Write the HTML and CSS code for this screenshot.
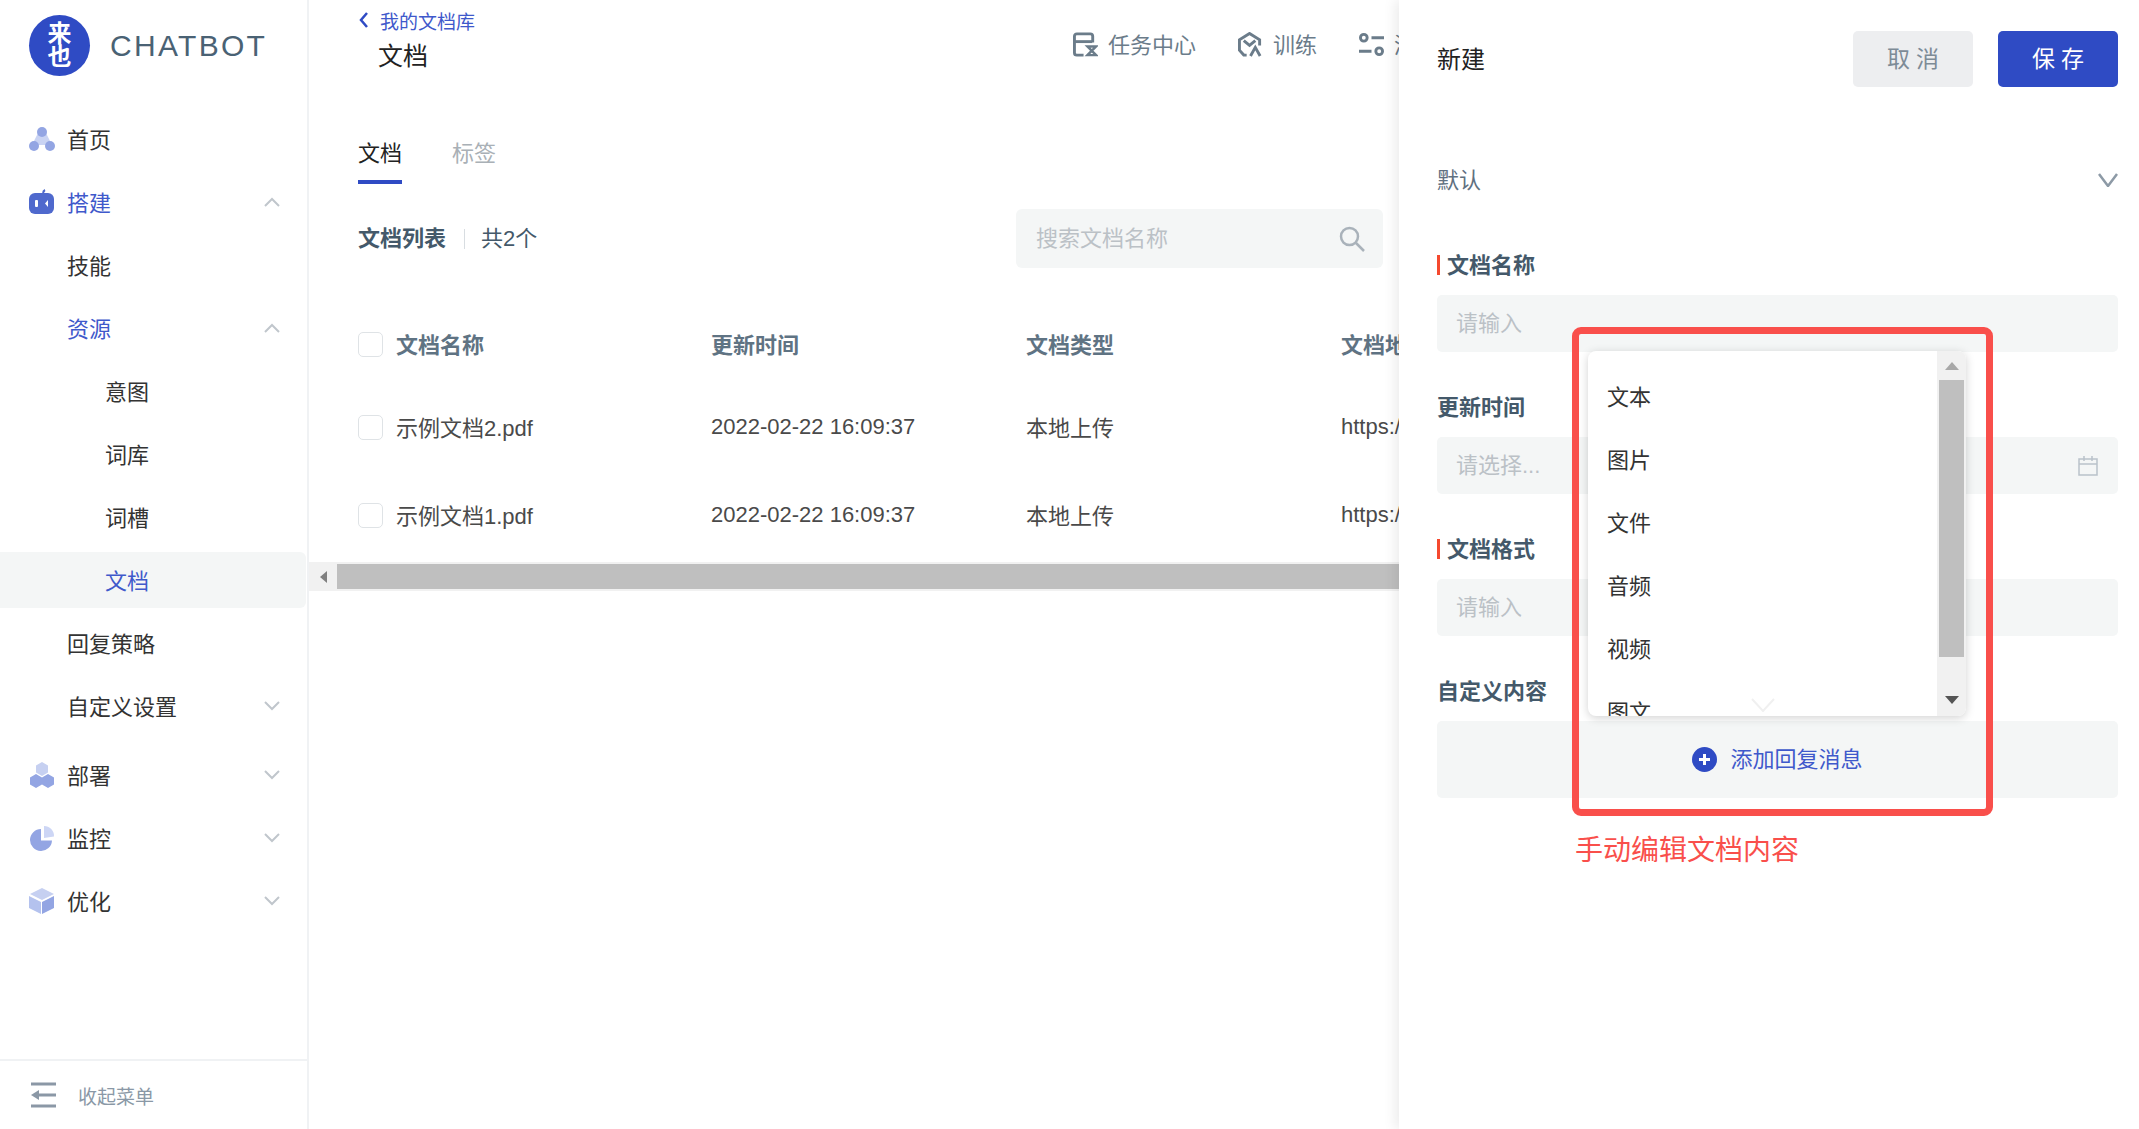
FILE: index.html
```html
<!DOCTYPE html>
<html>
<head>
	<title>CHATBOT</title>
	<meta charset="utf-8">
	<link rel="stylesheet" href="styles.css">
</head>
<body>

<div class="sidebar">
	<div class="logo">
		<div class="logo-mark">来<br>也</div>
		<span class="logo-name">CHATBOT</span>
	</div>
	<div class="menu">
		<div class="item">
			<svg class="micon" viewBox="0 0 26 26"><path d="M9 7h8l6 12H3z" fill="#c9d3f3"/><circle cx="13" cy="6" r="5" fill="#93a5e3"/><circle cx="5" cy="20" r="5" fill="#93a5e3"/><circle cx="21" cy="20" r="5" fill="#93a5e3"/></svg>
			<span>首页</span>
		</div>
		<div class="item active">
			<svg class="micon" viewBox="0 0 26 26"><path d="M14 5c0-2 0-3 2-4" fill="none" stroke="#4d68cb" stroke-width="2"/><rect y="4" width="25" height="21" rx="6" fill="#4f69cd"/><rect x="6" y="11" width="3" height="7" rx="1" fill="#fff"/><path d="M19 11l-3 3.500 3 3.500z" fill="#fff"/></svg>
			<span>搭建</span>
			<svg class="arrow" viewBox="0 0 16 10"><path d="M1 9l7-7 7 7"/></svg>
		</div>
		<div class="item"><span class="lv2">技能</span></div>
		<div class="item active">
			<span class="lv2">资源</span>
			<svg class="arrow" viewBox="0 0 16 10"><path d="M1 9l7-7 7 7"/></svg>
		</div>
		<div class="item"><span class="lv3">意图</span></div>
		<div class="item"><span class="lv3">词库</span></div>
		<div class="item"><span class="lv3">词槽</span></div>
		<div class="item active selected"><span class="lv3">文档</span></div>
		<div class="item"><span class="lv2">回复策略</span></div>
		<div class="item">
			<span class="lv2">自定义设置</span>
			<svg class="arrow" viewBox="0 0 16 10"><path d="M1 1l7 7 7-7"/></svg>
		</div>
		<div class="item group">
			<svg class="micon" viewBox="0 0 26 26"><path d="M13 0l6 3.500v7L13 14l-6-3.500v-7z" fill="#c6d0f1"/><path d="M7 12l6 3.500v7L7 26l-6-3.500v-7z" fill="#93a5e3"/><path d="M19 12l6 3.500v7L19 26l-6-3.500v-7z" fill="#93a5e3"/></svg>
			<span>部署</span>
			<svg class="arrow" viewBox="0 0 16 10"><path d="M1 1l7 7 7-7"/></svg>
		</div>
		<div class="item">
			<svg class="micon" viewBox="0 0 26 26"><path d="M12 4a11 11 0 1 0 11 11.500H12z" fill="#93a5e3"/><path d="M15 1a10 10 0 0 1 10 10.500l-10 1.500z" fill="#cdd6f5"/></svg>
			<span>监控</span>
			<svg class="arrow" viewBox="0 0 16 10"><path d="M1 1l7 7 7-7"/></svg>
		</div>
		<div class="item">
			<svg class="micon" viewBox="0 0 26 26"><path d="M13 0l12 6-12 6L1 6z" fill="#c6d0f1"/><path d="M0 8l12 6v12L0 20z" fill="#b4c2ee"/><path d="M25 8l-12 6v12l12-6z" fill="#93a5e3"/></svg>
			<span>优化</span>
			<svg class="arrow" viewBox="0 0 16 10"><path d="M1 1l7 7 7-7"/></svg>
		</div>
	</div>
	<div class="collapse">
		<svg class="collapse-icon" viewBox="0 0 26 26" fill="none" stroke="#8b98a6" stroke-width="3"><path d="M0 2h25M0 24h25M4 13h21"/><path d="M0 13l8-5v10z" fill="#8b98a6" stroke="none"/></svg>
		<span>收起菜单</span>
	</div>
</div>

<div class="main">
	<div class="topbar">
		<div class="crumbs">
			<div class="back">
				<svg class="back-icon" viewBox="0 0 10 18"><path d="M8 2L2 9l6 7"/></svg>
				<span>我的文档库</span>
			</div>
			<div class="title">文档</div>
		</div>
		<div class="actions">
			<div class="action">
				<svg class="aicon" viewBox="0 0 26 26" fill="none" stroke="#6b7c8a" stroke-width="3"><path d="M11 24H4a2.500 2.500 0 0 1-2.500-2.500v-17A2.500 2.500 0 0 1 4 2h14a2.500 2.500 0 0 1 2.500 2.500V11"/><path d="M2 10h18"/><path d="M15 15h9l-9 9h9z" stroke-width="2.500"/></svg>
				<span>任务中心</span>
			</div>
			<div class="action">
				<svg class="aicon" viewBox="0 0 26 26" fill="none" stroke="#6b7c8a" stroke-width="3"><path d="M9 24H6l-4.500-5V8L12 1.500 22.500 8v6"/><path d="M6 9l6 5 6-5"/><path d="M13 25l5-9 5 9"/></svg>
				<span>训练</span>
			</div>
			<div class="action">
				<svg class="aicon" viewBox="0 0 26 26" fill="none" stroke="#6b7c8a" stroke-width="3"><circle cx="5" cy="6" r="3.500"/><path d="M13 6h13M0 20h13"/><circle cx="21" cy="20" r="3.500"/></svg>
				<span>测试</span>
			</div>
		</div>
	</div>

	<div class="tabs">
		<div class="tab on">文档</div>
		<div class="tab">标签</div>
	</div>

	<div class="listbar">
		<b class="list-title">文档列表</b>
		<i class="sep"></i>
		<span class="count">共2个</span>
		<div class="search">
			<span>搜索文档名称</span>
			<svg class="search-icon" viewBox="0 0 26 26" fill="none" stroke="#a9b2ba" stroke-width="2.500"><circle cx="10.500" cy="10.500" r="8.500"/><path d="M17 17l8 8"/></svg>
		</div>
	</div>

	<div class="table">
		<div class="row head">
			<div class="cell"><i class="check"></i><span>文档名称</span></div>
			<div class="cell"><span>更新时间</span></div>
			<div class="cell"><span>文档类型</span></div>
			<div class="cell"><span>文档地址</span></div>
		</div>
		<div class="row">
			<div class="cell"><i class="check"></i><span>示例文档2.pdf</span></div>
			<div class="cell">2022-02-22 16:09:37</div>
			<div class="cell"><span>本地上传</span></div>
			<div class="cell">https://</div>
		</div>
		<div class="row">
			<div class="cell"><i class="check"></i><span>示例文档1.pdf</span></div>
			<div class="cell">2022-02-22 16:09:37</div>
			<div class="cell"><span>本地上传</span></div>
			<div class="cell">https://</div>
		</div>
	</div>

	<div class="hscroll">
		<div class="hbtn"><i class="tri-left"></i></div>
		<div class="hthumb"></div>
	</div>
</div>

<div class="panel">
	<div class="panel-head">
		<div class="panel-title">新建</div>
		<div class="btns">
			<button class="btn cancel">取消</button>
			<button class="btn save">保存</button>
		</div>
	</div>

	<div class="default-row">
		<span>默认</span>
		<svg class="default-arrow" viewBox="0 0 20 14"><path d="M1 1l9 12 9-12"/></svg>
	</div>

	<div class="field first">
		<div class="label req"><span>文档名称</span></div>
		<div class="input"><span>请输入</span></div>
	</div>
	<div class="field">
		<div class="label"><span>更新时间</span></div>
		<div class="input">
			<span>请选择...</span>
			<svg class="cal" viewBox="0 0 20 20" fill="none" stroke="#b9c2ca" stroke-width="1.500"><rect x="1" y="3" width="18" height="16"/><path d="M1 8h18M6 0v5M14 0v5"/></svg>
		</div>
	</div>
	<div class="field">
		<div class="label req"><span>文档格式</span></div>
		<div class="input"><span>请输入</span></div>
	</div>
	<div class="field">
		<div class="label"><span>自定义内容</span></div>
		<div class="addbox">
			<svg class="plus" viewBox="0 0 25 25"><circle cx="12.500" cy="12.500" r="12.500" fill="#2f4bc4"/><path d="M7 12.500h11M12.500 7v11" stroke="#fff" stroke-width="3"/></svg>
			<span>添加回复消息</span>
		</div>
	</div>

	<!-- marca roja y menu desplegable encima del formulario -->
	<div class="redbox"></div>
	<div class="dropdown">
		<div class="options">
			<div class="option">文本</div>
			<div class="option">图片</div>
			<div class="option">文件</div>
			<div class="option">音频</div>
			<div class="option">视频</div>
			<div class="option">图文</div>
		</div>
		<div class="vscroll">
			<i class="tri-up"></i>
			<div class="vthumb"></div>
			<i class="tri-down"></i>
		</div>
		<svg class="more" viewBox="0 0 24 16"><path d="M1 3l11 12L23 3" fill="#fff" stroke="#f0f0f0" stroke-width="2"/></svg>
	</div>
	<div class="note">手动编辑文档内容</div>
</div>

</body>
</html>
```

FILE: styles.css
```css
* {
	box-sizing: border-box;
}
html, body {
	height: 100%;
}
body {
	margin: 0;
	display: flex;
	overflow: hidden;
	position: relative;
	background-color: #fff;
	color: #333;
	font-family: "Liberation Sans", "Noto Sans CJK SC", sans-serif;
	font-size: 22px;
}

/* menu lateral */
.sidebar {
	width: 309px;
	flex-shrink: 0;
	display: flex;
	flex-direction: column;
	border-right: 2px solid #f0f2f4;
}
.logo {
	display: flex;
	align-items: center;
	gap: 20px;
	padding: 15px 0 0 29px;
}
.logo-mark {
	width: 61px;
	height: 61px;
	border-radius: 50%;
	background-color: #2f4bc4;
	color: #fff;
	font-size: 24px;
	font-weight: bold;
	line-height: 23px;
	text-align: center;
	padding-top: 7px;
}
.logo-name {
	font-size: 30px;
	letter-spacing: 2.3px;
	color: #4a6274;
}
.menu {
	margin-top: 35px;
}
.item {
	height: 56px;
	margin-bottom: 7px;
	display: flex;
	align-items: center;
	padding-left: 29px;
	padding-right: 27px;
	color: #333;
}
.item span {
	margin-bottom: 3px;
}
.item.active {
	color: #3f59cb;
}
.item.selected {
	background-color: #f4f6f6;
	border-radius: 0 6px 6px 0;
	width: 306px;
}
.item.group {
	margin-top: 13px;
}
.micon {
	width: 26px;
	height: 26px;
	margin-right: 12px;
	flex-shrink: 0;
}
.lv2 {
	margin-left: 38px;
}
.lv3 {
	margin-left: 76px;
}
.arrow {
	width: 16px;
	height: 10px;
	margin-left: auto;
	fill: none;
	stroke: #c0c6cc;
	stroke-width: 2;
}
.collapse {
	margin-top: auto;
	height: 70px;
	border-top: 2px solid #f0f2f4;
	display: flex;
	align-items: center;
	padding-left: 31px;
	font-size: 19px;
	color: #8a98a6;
}
.collapse-icon {
	width: 26px;
	height: 26px;
	margin-right: 21px;
}

/* contenido */
.main {
	flex: 1;
	min-width: 0;
	margin-right: 740px;
	padding-left: 49px;
	overflow: hidden;
}
.topbar {
	display: flex;
	height: 72px;
	padding-top: 8px;
}
.crumbs {
	width: 715px;
	flex-shrink: 0;
}
.back {
	display: flex;
	align-items: center;
	height: 24px;
	color: #3f59cb;
	font-size: 19px;
}
.back-icon {
	width: 10px;
	height: 18px;
	margin: 0 11px 0 1px;
	fill: none;
	stroke: #2f4bc4;
	stroke-width: 2.5;
}
.title {
	margin: 8px 0 0 20px;
	font-size: 25px;
	line-height: 32px;
	color: #222;
}
.actions {
	display: flex;
	gap: 42px;
	height: 36px;
	margin-top: 18px;
	align-items: center;
	color: #6b7c8a;
	white-space: nowrap;
}
.action {
	display: flex;
	align-items: center;
	gap: 10px;
}
.action span {
	margin-bottom: 2px;
}
.aicon {
	width: 25px;
	height: 25px;
}
.tabs {
	display: flex;
	gap: 50px;
	margin-top: 66px;
}
.tab {
	line-height: 30px;
	padding: 1px 0 11px;
	border-bottom: 4px solid transparent;
	color: #a9b0b6;
}
.tab.on {
	color: #222;
	border-bottom-color: #2f4bc4;
}
.listbar {
	display: flex;
	align-items: center;
	margin-top: 25px;
	padding-right: 16px;
}
.list-title {
	margin-bottom: 5px;
	color: #44596a;
}
.sep {
	width: 1px;
	height: 20px;
	margin: 0 16px 0 18px;
	background-color: #d8dde1;
}
.count {
	margin-bottom: 5px;
	color: #44596a;
}
.search {
	width: 367px;
	height: 59px;
	margin-left: auto;
	display: flex;
	align-items: center;
	justify-content: space-between;
	padding: 0 18px 0 20px;
	background-color: #f4f6f6;
	border-radius: 6px;
	color: #bbc1c6;
}
.search span {
	margin-bottom: 5px;
}
.search-icon {
	width: 26px;
	height: 26px;
}
.table {
	margin-top: 37px;
}
.row {
	display: grid;
	grid-template-columns: 353px 315px 315px 315px;
	height: 88px;
	align-items: center;
	color: #4a4a4a;
	white-space: nowrap;
}
.row.head {
	height: 78px;
	color: #5f7383;
	font-weight: bold;
}
.cell {
	display: flex;
	align-items: center;
}
.cell span {
	margin-bottom: 3px;
}
.check {
	width: 25px;
	height: 25px;
	margin-right: 13px;
	border: 1px solid #dfe3e6;
	border-radius: 5px;
}
.hscroll {
	display: flex;
	align-items: center;
	height: 29px;
	margin: 3px 0 0 -49px;
	background-color: #f1f1f1;
}
.hbtn {
	width: 28px;
	display: flex;
	justify-content: center;
}
.tri-left {
	border-right: 7px solid #808080;
	border-top: 6px solid transparent;
	border-bottom: 6px solid transparent;
}
.hthumb {
	flex: 1;
	height: 25px;
	background-color: #bfbfbf;
}

/* panel derecho */
.panel {
	position: absolute;
	top: 0;
	right: 0;
	width: 740px;
	height: 100%;
	padding: 31px 21px 0 38px;
	background-color: #fff;
	box-shadow: -4px 0 12px rgba(0, 0, 0, 0.08);
}
.panel-head {
	display: flex;
	align-items: center;
	justify-content: space-between;
	height: 56px;
}
.panel-title {
	margin-bottom: 3px;
	font-size: 24px;
	color: #222;
}
.btns {
	display: flex;
	gap: 25px;
}
.btn {
	width: 120px;
	height: 56px;
	border: none;
	border-radius: 5px;
	font-family: inherit;
	font-size: 23px;
	letter-spacing: 6px;
	padding: 0 0 4px 6px;
}
.cancel {
	background-color: #edeef0;
	color: #7d8b97;
}
.save {
	background-color: #2f4bc4;
	color: #fff;
}
.default-row {
	display: flex;
	align-items: center;
	justify-content: space-between;
	height: 30px;
	margin-top: 78px;
	color: #5f7080;
}
.default-row span {
	margin-bottom: 5px;
}
.default-arrow {
	width: 20px;
	height: 14px;
	fill: none;
	stroke: #8d9aa6;
	stroke-width: 2.5;
}
.field {
	margin-top: 40px;
}
.field.first {
	margin-top: 55px;
}
.label {
	height: 30px;
	margin-bottom: 15px;
	display: flex;
	align-items: center;
	font-weight: bold;
	color: #44596a;
}
.label span {
	margin-bottom: 5px;
}
.label.req::before {
	content: "";
	width: 3px;
	height: 20px;
	margin-right: 7px;
	background-color: #f5492f;
}
.input {
	height: 57px;
	display: flex;
	align-items: center;
	justify-content: space-between;
	padding: 0 20px 0 19px;
	background-color: #f4f6f6;
	border-radius: 5px;
	color: #bbc1c6;
}
.input span {
	margin-bottom: 6px;
}
.cal {
	width: 20px;
	height: 20px;
}
.addbox {
	height: 77px;
	display: flex;
	align-items: center;
	justify-content: center;
	gap: 13px;
	background-color: #f4f6f6;
	border-radius: 5px;
	color: #3f59cb;
}
.addbox span {
	margin-bottom: 6px;
}
.plus {
	width: 25px;
	height: 25px;
}
.redbox {
	position: absolute;
	left: 173px;
	top: 327px;
	width: 421px;
	height: 489px;
	border: 7px solid #f94f4b;
	border-radius: 9px;
}
.dropdown {
	position: absolute;
	left: 189px;
	top: 351px;
	width: 378px;
	height: 365px;
	display: flex;
	overflow: hidden;
	background-color: #fff;
	border-radius: 8px;
	box-shadow: 0 2px 10px rgba(0, 0, 0, 0.18);
}
.options {
	flex: 1;
	padding: 15px 0 0 19px;
	overflow: hidden;
}
.option {
	height: 63px;
	line-height: 63px;
	color: #333;
}
.vscroll {
	width: 29px;
	display: flex;
	flex-direction: column;
	align-items: center;
	padding-top: 11px;
	background-color: #f1f1f1;
}
.tri-up {
	border-bottom: 8px solid #a8a8a8;
	border-left: 7px solid transparent;
	border-right: 7px solid transparent;
}
.tri-down {
	margin-top: 39px;
	border-top: 8px solid #555;
	border-left: 7px solid transparent;
	border-right: 7px solid transparent;
}
.vthumb {
	width: 25px;
	height: 277px;
	margin: 10px 0 0 0;
	background-color: #bfbfbf;
}
.more {
	position: absolute;
	left: 163px;
	bottom: 4px;
	width: 24px;
	height: 16px;
}
.note {
	position: absolute;
	left: 176px;
	top: 834px;
	font-size: 28px;
	line-height: 34px;
	color: #f94f4b;
	white-space: nowrap;
}
```
